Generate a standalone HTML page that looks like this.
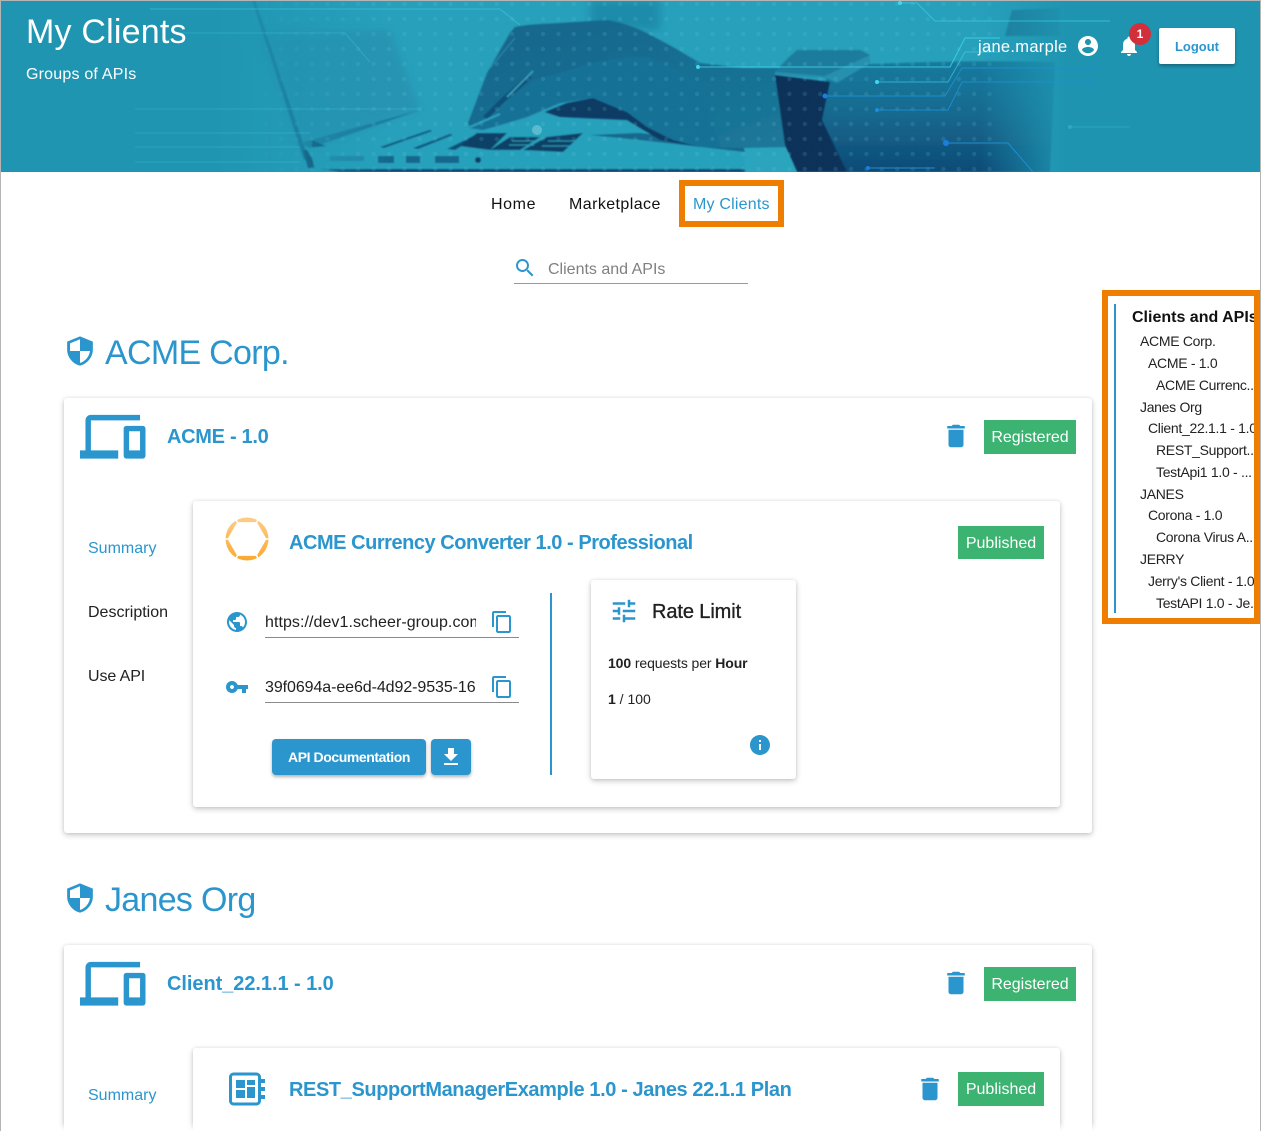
<!DOCTYPE html>
<html><head><meta charset="utf-8"><title>My Clients</title>
<style>
html,body{margin:0;padding:0;background:#fff;width:1261px;height:1131px;overflow:hidden;}
#w{width:1261px;height:1131px;position:relative;overflow:hidden;font-family:"Liberation Sans",Arial,sans-serif;color:#212121;background:#fff;}
.t{position:absolute;white-space:nowrap;line-height:1;}
.b{position:absolute;box-sizing:border-box;}
.card{position:absolute;background:#fff;border-radius:3px;box-shadow:0 2px 6px rgba(0,0,0,.22),0 0 3px rgba(0,0,0,.08);}
.blue{color:#2b96cd;}
.h2{font-size:34px;color:#2b96cd;letter-spacing:-.7px;}
.h5{font-size:20px;font-weight:bold;color:#2b96cd;}
.badge{position:absolute;background:#3cb371;color:#fff;font-size:16px;text-align:center;}
svg.i{position:absolute;fill:#2b96cd;}
.side{font-size:14px;color:#222;letter-spacing:-.3px;}
</style></head>
<body><div id="w">
<svg style="position:absolute;left:0;top:0" width="1261" height="172" viewBox="0 0 1261 172">
<defs>
<linearGradient id="fadeL" x1="0" x2="1" y1="0" y2="0"><stop offset="0" stop-color="#1f95b1"/><stop offset=".55" stop-color="#1f95b1"/><stop offset="1" stop-color="#1f95b1" stop-opacity="0"/></linearGradient>
<linearGradient id="fadeR" x1="0" x2="1" y1="0" y2="0"><stop offset="0" stop-color="#1e94b0" stop-opacity="0"/><stop offset="1" stop-color="#1e94b0"/></linearGradient>
<linearGradient id="arm" x1="0" x2="0" y1="0" y2="1"><stop offset="0" stop-color="#187a9d"/><stop offset=".45" stop-color="#146a90"/><stop offset="1" stop-color="#0f4a76"/></linearGradient>
<linearGradient id="hand" x1="0" x2="1" y1="0" y2="1"><stop offset="0" stop-color="#15648a"/><stop offset="1" stop-color="#1a7899"/></linearGradient>
<linearGradient id="hex" x1="0" x2="0" y1="0" y2="1"><stop offset="0" stop-color="#fdcd8a"/><stop offset="1" stop-color="#fba92e"/></linearGradient>
<pattern id="dots" width="15.4" height="15" patternUnits="userSpaceOnUse"><circle cx="4" cy="4" r="2.2" fill="#6fcbdc" opacity=".4"/></pattern>
<filter id="bl"><feGaussianBlur stdDeviation=".7"/></filter>
<filter id="bl3"><feGaussianBlur stdDeviation="4"/></filter>
<filter id="noise" x="0" y="0" width="100%" height="100%"><feTurbulence baseFrequency=".9" numOctaves="2" seed="3"/><feColorMatrix values="0 0 0 0 .1  0 0 0 0 .3  0 0 0 0 .4  .6 .6 0 0 -.35"/></filter>
</defs>
<rect width="1261" height="172" fill="#27a0bc"/>
<polygon points="255,30 390,30 420,110 300,150" fill="#2594b2" filter="url(#bl3)"/>
<rect x="590" y="0" width="70" height="30" fill="#1f8caa" filter="url(#bl3)"/>
<g filter="url(#bl)">
<polygon points="252,0 255,0 308,158 304,160" fill="#14688c"/>
<polygon points="300,143 420,110 310,148" fill="#1a7a9c"/>
<polygon points="312,140 328,147 312,149" fill="#0f4a72"/>
<polygon points="303,150 311,150 314,168 308,168" fill="#0e3f66"/>
<polygon points="306,148 460,133 560,118 650,133 745,148 745,172 320,172" fill="#28a1bc"/>
<polygon points="320,169 745,169 745,172 340,172" fill="#0f4a72"/>
<polygon points="380,147 430,130 432,131 384,148" fill="#11597f"/>
<polygon points="413,148 450,134 453,135 418,149" fill="#11597f"/>
<polygon points="447,149 473,136 477,137 455,150" fill="#114f78"/>
<polygon points="460,146 477,133 507,133 490,150" fill="#0f3f66"/>
<polygon points="490,150 510,137 540,137 520,150" fill="#0f3f66"/>
<polygon points="523,150 547,137 583,133 563,152" fill="#0f3f66"/>
<path d="M512,141 H538 M509,145 H534 M548,141 H575 M542,146 H570" stroke="#2f9bb6" stroke-width="1" fill="none"/>
<rect x="378" y="156" width="16" height="7" fill="#14668c"/>
<rect x="406" y="156" width="14" height="7" fill="#14668c"/>
<rect x="435" y="156" width="24" height="7" fill="#14668c"/>
<circle cx="478" cy="160" r="3" fill="#0f3f66"/>
<rect x="330" y="156" width="34" height="5" fill="#2187a8"/>
<polygon points="590,135 640,133 743,146 745,152 640,140" fill="#14688c"/>
<polygon points="745,148 785,148 793,163 815,172 745,172" fill="#2aa5bd"/>
<path d="M835,66 C900,62 980,60 1055,62 L1050,172 L815,172 L800,120 Z" fill="url(#arm)"/>
<path d="M545,112 L567,103 593,98 627,112 660,130 700,147 660,140 627,120 560,117 Z" fill="#0e3b63"/>
<path d="M468,123 L487,73 510,33 515,27 C530,24 545,24 560,23 L607,20 C620,22 635,27 647,33 L673,47 700,63 743,68 778,68 L788,147 745,148 700,147 673,140 647,127 627,112 593,98 560,103 527,117 483,130 470,128 Z" fill="url(#hand)"/>
<path d="M470,128 L503,103 533,80 560,73 593,63 627,57 647,57 700,80 720,147 700,147 673,140 647,127 627,112 593,98 560,103 527,117 483,130 Z" fill="#187197"/>
<path d="M485,118 L503,100 530,76" stroke="#114f78" stroke-width="5" fill="none"/>
<path d="M507,97 L533,71" stroke="#3aa3bd" stroke-width="1.6" fill="none"/>
<path d="M490,68 L515,38" stroke="#2b8aaa" stroke-width="1" fill="none"/>
<path d="M470,127 L500,114" stroke="#2fa4bf" stroke-width="2" fill="none"/>
<path d="M775,75 L830,82 822,120 847,172 797,172 785,145 Z" fill="#10305a"/>
<path d="M775,72 L788,58 797,50 860,50 870,55 870,63 837,83 825,78 775,75 Z" fill="#1c7b9d"/>
<path d="M775,72 L825,76 870,55 870,63 837,83 825,78 775,75 Z" fill="#2790ae"/>
<polygon points="1012,10 1060,8 1060,36 1005,36" fill="#1a7a9a"/>
</g>
<rect width="1261" height="172" fill="url(#dots)" opacity=".4" style="clip-path:polygon(265px 0,1000px 0,1000px 172px,265px 172px)"/>
<rect width="1261" height="172" filter="url(#noise)" opacity=".2"/>
<rect x="0" y="0" width="390" height="172" fill="url(#fadeL)"/>
<rect x="980" y="0" width="90" height="172" fill="url(#fadeR)"/>
<rect x="1068" y="0" width="193" height="172" fill="#1e94b0"/>
<g fill="none" stroke-width="1">
<path d="M150,9 H500 L520,25" stroke="#45d0e4" opacity=".5"/>
<path d="M180,33 H345 L370,62" stroke="#45d0e4" opacity=".3"/>
<path d="M135,109 H420 M135,133 H310 M135,147 H300 M135,162 H300" stroke="#45d0e4" opacity=".3"/>
<path d="M900,3 H917 L935,21 H1110" stroke="#3ed7ef" opacity=".6"/>
<path d="M698,67 H950 L965,38 H1000" stroke="#3ed7ef" opacity=".8"/>
<path d="M877,82 H948 L965,52 H1000" stroke="#3ed7ef" opacity=".6"/>
<path d="M825,96 H945 L962,68 H1100" stroke="#1d8fd0" opacity=".9"/>
<path d="M877,110 H948 L962,82 H1100" stroke="#1d8fd0" opacity=".9"/>
<path d="M946,143 H1008 L1033,172" stroke="#1d8fd0"/>
<path d="M868,168 H935" stroke="#1d8fd0"/>
<path d="M1070,127 H1130" stroke="#2ba9c8" opacity=".7"/>
</g>
<g>
<circle cx="900" cy="3" r="2" fill="#3ed7ef"/><circle cx="698" cy="67" r="2" fill="#3ed7ef"/><circle cx="877" cy="82" r="2" fill="#3ed7ef"/><circle cx="825" cy="96" r="2.5" fill="#1a7fe0"/><circle cx="877" cy="110" r="2" fill="#1a8fe0"/><circle cx="946" cy="143" r="3" fill="#1a7fe0"/><circle cx="1070" cy="127" r="2" fill="#2ba9c8"/><circle cx="868" cy="168" r="2" fill="#1a7fe0"/>
<circle cx="537" cy="130" r="5" fill="#8fd4e0" opacity=".5"/>
</g>
</svg>
<div class="b" style="left:0;top:0;width:1261px;height:1px;background:#b5b5b5"></div>
<div class="b" style="left:0;top:0;width:1px;height:1131px;background:#b5b5b5"></div>
<div class="b" style="left:1260px;top:0;width:1px;height:1131px;background:#b5b5b5"></div>

<div class="t" style="left:26px;top:15px;font-size:34px;color:#fff;letter-spacing:.2px">My Clients</div>
<div class="t" style="left:26px;top:67px;font-size:16px;color:#fff;letter-spacing:.2px">Groups of APIs</div>
<div class="t" style="left:978px;top:39px;font-size:16.5px;color:#fff;letter-spacing:.3px">jane.marple</div>
<svg class="i" style="left:1076px;top:34px;fill:#fff" width="24" height="24" viewBox="0 0 24 24"><path d="M12 2C6.48 2 2 6.48 2 12s4.48 10 10 10 10-4.48 10-10S17.52 2 12 2zm0 3c1.66 0 3 1.34 3 3s-1.34 3-3 3-3-1.34-3-3 1.34-3 3-3zm0 14.2c-2.5 0-4.71-1.28-6-3.22.03-1.99 4-3.08 6-3.08 1.99 0 5.97 1.09 6 3.08-1.29 1.94-3.5 3.22-6 3.22z"/></svg>
<svg class="i" style="left:1117px;top:34px;fill:#fff" width="24" height="24" viewBox="0 0 24 24"><path d="M12 22c1.1 0 2-.9 2-2h-4c0 1.1.89 2 2 2zm6-6v-5c0-3.07-1.64-5.64-4.5-6.32V4c0-.83-.67-1.5-1.5-1.5s-1.5.67-1.5 1.5v.68C7.63 5.36 6 7.92 6 11v5l-2 2v1h16v-1l-2-2z"/></svg>
<div class="b" style="left:1129px;top:23px;width:22px;height:22px;border-radius:50%;background:#d32f3a;color:#fff;font-size:12px;font-weight:bold;text-align:center;line-height:22px">1</div>
<div class="b" style="left:1159px;top:28px;width:76px;height:36px;background:#fff;border-radius:2px;box-shadow:0 2px 3px rgba(0,0,0,.3);color:#2b96cd;font-size:13px;font-weight:bold;text-align:center;line-height:37px">Logout</div>

<div class="t" style="left:491px;top:197px;font-size:16px;color:#111;letter-spacing:.6px">Home</div>
<div class="t" style="left:569px;top:197px;font-size:16px;color:#111;letter-spacing:.42px">Marketplace</div>
<div class="b" style="left:679px;top:180px;width:105px;height:47px;border:6px solid #ef7d00"></div>
<div class="t blue" style="left:693px;top:197px;font-size:16px;letter-spacing:.2px">My Clients</div>

<svg class="i" style="left:513px;top:256px" width="24" height="24" viewBox="0 0 24 24"><path d="M15.5 14h-.79l-.28-.27C15.41 12.59 16 11.11 16 9.5 16 5.91 13.09 3 9.5 3S3 5.91 3 9.5 5.91 16 9.5 16c1.61 0 3.09-.59 4.23-1.57l.27.28v.79l5 4.99L20.49 19l-4.99-5zm-6 0C7.01 14 5 11.99 5 9.5S7.01 5 9.5 5 14 7.01 14 9.5 11.99 14 9.5 14z"/></svg>
<div class="t" style="left:548px;top:262px;font-size:16px;color:#808080">Clients and APIs</div>
<div class="b" style="left:514px;top:283px;width:234px;height:1px;background:#999"></div>

<div class="b" style="left:1102px;top:290px;width:158px;height:334px;border:6px solid #ef7d00;background:#fff"></div>
<div class="b" style="left:1114px;top:304px;width:2px;height:309px;background:#2b96cd"></div>
<div class="b" style="left:1108px;top:296px;width:146px;height:322px;overflow:hidden">
<div class="t" style="left:24px;top:14px;font-size:16px;font-weight:bold;color:#111">Clients and APIs</div>
<div class="t side" style="left:32px;top:38px">ACME Corp.</div>
<div class="t side" style="left:40px;top:60px">ACME - 1.0</div>
<div class="t side" style="left:48px;top:82px">ACME Currenc...</div>
<div class="t side" style="left:32px;top:104px">Janes Org</div>
<div class="t side" style="left:40px;top:125px">Client_22.1.1 - 1.0</div>
<div class="t side" style="left:48px;top:147px">REST_Support...</div>
<div class="t side" style="left:48px;top:169px">TestApi1 1.0 - ...</div>
<div class="t side" style="left:32px;top:191px">JANES</div>
<div class="t side" style="left:40px;top:212px">Corona - 1.0</div>
<div class="t side" style="left:48px;top:234px">Corona Virus A...</div>
<div class="t side" style="left:32px;top:256px">JERRY</div>
<div class="t side" style="left:40px;top:278px">Jerry's Client - 1.0</div>
<div class="t side" style="left:48px;top:300px">TestAPI 1.0 - Je...</div>
</div>

<svg class="i" style="left:65px;top:335px" width="30" height="32" viewBox="1.5 0 21 24" preserveAspectRatio="none"><path d="M12 1L3 5v6c0 5.55 3.84 10.74 9 12 5.16-1.26 9-6.45 9-12V5l-9-4zm0 10.99h7c-.53 4.12-3.28 7.79-7 8.94V12H5V6.3l7-3.11v8.8z"/></svg>
<div class="t h2" style="left:105px;top:336px">ACME Corp.</div>

<div class="card" style="left:64px;top:398px;width:1028px;height:435px"></div>
<svg class="i" style="left:80px;top:404px" width="65.5" height="65.5" viewBox="0 0 24 24"><path d="M4 6h18V4H4c-1.1 0-2 .9-2 2v11H0v3h14v-3H4V6zm19 2h-6c-.55 0-1 .45-1 1v10c0 .55.45 1 1 1h6c.55 0 1-.45 1-1V9c0-.55-.45-1-1-1zm-1 9h-4v-7h4v7z"/></svg>
<div class="t h5" style="left:167px;top:427px;letter-spacing:-.3px">ACME - 1.0</div>
<svg class="i" style="left:941px;top:421px" width="30" height="30" viewBox="0 0 24 24"><path d="M6 19c0 1.1.9 2 2 2h8c1.1 0 2-.9 2-2V7H6v12zM19 4h-3.5l-1-1h-5l-1 1H5v2h14V4z"/></svg>
<div class="badge" style="left:984px;top:420px;width:92px;height:34px;line-height:36px">Registered</div>

<div class="t blue" style="left:88px;top:541px;font-size:16px">Summary</div>
<div class="t" style="left:88px;top:605px;font-size:16px">Description</div>
<div class="t" style="left:88px;top:669px;font-size:16px;letter-spacing:-.1px">Use API</div>

<div class="card" style="left:193px;top:501px;width:867px;height:306px"></div>
<svg style="position:absolute;left:224px;top:516px" width="46" height="46" viewBox="0 0 46 46">
<circle cx="23" cy="23" r="21.5" fill="url(#hex)"/>
<polygon points="42.5,23 32.75,6.1 13.25,6.1 3.5,23 13.25,39.9 32.75,39.9" fill="#fff"/>
<path d="M0,23 H46 M11.5,3 L34.5,43 M34.5,3 L11.5,43" stroke="#fff" stroke-width="1.6"/>
</svg>
<div class="t h5" style="left:289px;top:533px;letter-spacing:-.47px">ACME Currency Converter 1.0 - Professional</div>
<div class="badge" style="left:958px;top:526px;width:86px;height:33px;line-height:35px">Published</div>

<svg class="i" style="left:225px;top:610px" width="24" height="24" viewBox="0 0 24 24"><path d="M12 2C6.48 2 2 6.48 2 12s4.48 10 10 10 10-4.48 10-10S17.52 2 12 2zm-1 17.93c-3.95-.49-7-3.85-7-7.93 0-.62.08-1.21.21-1.79L9 15v1c0 1.1.9 2 2 2v1.93zm6.9-2.54c-.26-.81-1-1.39-1.9-1.39h-1v-3c0-.55-.45-1-1-1H8v-2h2c.55 0 1-.45 1-1V7h2c1.1 0 2-.9 2-2v-.41c2.93 1.19 5 4.06 5 7.41 0 2.08-.8 3.97-2.1 5.39z"/></svg>
<div class="b" style="left:265px;top:613px;width:211px;height:20px;overflow:hidden;font-size:16px;line-height:20px;white-space:nowrap;letter-spacing:.06px">https://dev1.scheer-group.com</div>
<svg class="i" style="left:490px;top:610px" width="24" height="24" viewBox="0 0 24 24"><path d="M16 1H4c-1.1 0-2 .9-2 2v14h2V3h12V1zm3 4H8c-1.1 0-2 .9-2 2v14c0 1.1.9 2 2 2h11c1.1 0 2-.9 2-2V7c0-1.1-.9-2-2-2zm0 16H8V7h11v14z"/></svg>
<div class="b" style="left:265px;top:637px;width:254px;height:1px;background:#8a8a8a"></div>

<svg class="i" style="left:225px;top:675px" width="24" height="24" viewBox="0 0 24 24"><path d="M12.65 10C11.83 7.67 9.61 6 7 6c-3.31 0-6 2.69-6 6s2.69 6 6 6c2.61 0 4.83-1.67 5.65-4H17v4h4v-4h2v-4H12.65zM7 14c-1.1 0-2-.9-2-2s.9-2 2-2 2 .9 2 2-.9 2-2 2z"/></svg>
<div class="b" style="left:265px;top:678px;width:214px;height:20px;overflow:hidden;font-size:16px;line-height:20px;white-space:nowrap;letter-spacing:-.08px">39f0694a-ee6d-4d92-9535-16</div>
<svg class="i" style="left:490px;top:675px" width="24" height="24" viewBox="0 0 24 24"><path d="M16 1H4c-1.1 0-2 .9-2 2v14h2V3h12V1zm3 4H8c-1.1 0-2 .9-2 2v14c0 1.1.9 2 2 2h11c1.1 0 2-.9 2-2V7c0-1.1-.9-2-2-2zm0 16H8V7h11v14z"/></svg>
<div class="b" style="left:265px;top:702px;width:254px;height:1px;background:#8a8a8a"></div>

<div class="b" style="left:272px;top:739px;width:154px;height:36px;background:#2b96cd;border-radius:4px;box-shadow:0 2px 3px rgba(0,0,0,.3);color:#fff;font-size:14px;font-weight:bold;text-align:center;line-height:37px;letter-spacing:-.42px">API Documentation</div>
<div class="b" style="left:431px;top:739px;width:40px;height:36px;background:#2b96cd;border-radius:4px;box-shadow:0 2px 3px rgba(0,0,0,.3)"></div>
<svg class="i" style="left:439px;top:745px;fill:#fff" width="24" height="24" viewBox="0 0 24 24"><path d="M19 9h-4V3H9v6H5l7 7 7-7zM5 18v2h14v-2H5z"/></svg>

<div class="b" style="left:550px;top:593px;width:2px;height:182px;background:#2b96cd"></div>

<div class="card" style="left:591px;top:580px;width:205px;height:199px"></div>
<svg class="i" style="left:609px;top:596px" width="30" height="30" viewBox="0 0 24 24"><path d="M3 17v2h6v-2H3zM3 5v2h10V5H3zm10 16v-2h8v-2h-8v-2h-2v6h2zM7 9v2H3v2h4v2h2V9H7zm14 4v-2H11v2h10zm-6-4h2V7h4V5h-4V3h-2v6z"/></svg>
<div class="t" style="left:652px;top:602px;font-size:20px;color:#212121;-webkit-text-stroke:.35px #212121;letter-spacing:-.1px">Rate Limit</div>
<div class="t" style="left:608px;top:656px;font-size:14px;letter-spacing:-.1px"><b>100</b> requests per <b>Hour</b></div>
<div class="t" style="left:608px;top:692px;font-size:14px"><b>1</b> / 100</div>
<svg class="i" style="left:748px;top:733px" width="24" height="24" viewBox="0 0 24 24"><path d="M12 2C6.48 2 2 6.48 2 12s4.48 10 10 10 10-4.48 10-10S17.52 2 12 2zm1 15h-2v-6h2v6zm0-8h-2V7h2v2z"/></svg>

<svg class="i" style="left:65px;top:882px" width="30" height="32" viewBox="1.5 0 21 24" preserveAspectRatio="none"><path d="M12 1L3 5v6c0 5.55 3.84 10.74 9 12 5.16-1.26 9-6.45 9-12V5l-9-4zm0 10.99h7c-.53 4.12-3.28 7.79-7 8.94V12H5V6.3l7-3.11v8.8z"/></svg>
<div class="t h2" style="left:105px;top:883px">Janes Org</div>

<div class="card" style="left:64px;top:945px;width:1028px;height:186px;border-radius:3px 3px 0 0"></div>
<svg class="i" style="left:80px;top:951px" width="65.5" height="65.5" viewBox="0 0 24 24"><path d="M4 6h18V4H4c-1.1 0-2 .9-2 2v11H0v3h14v-3H4V6zm19 2h-6c-.55 0-1 .45-1 1v10c0 .55.45 1 1 1h6c.55 0 1-.45 1-1V9c0-.55-.45-1-1-1zm-1 9h-4v-7h4v7z"/></svg>
<div class="t h5" style="left:167px;top:974px;letter-spacing:-.06px">Client_22.1.1 - 1.0</div>
<svg class="i" style="left:941px;top:968px" width="30" height="30" viewBox="0 0 24 24"><path d="M6 19c0 1.1.9 2 2 2h8c1.1 0 2-.9 2-2V7H6v12zM19 4h-3.5l-1-1h-5l-1 1H5v2h14V4z"/></svg>
<div class="badge" style="left:984px;top:967px;width:92px;height:34px;line-height:36px">Registered</div>

<div class="t blue" style="left:88px;top:1088px;font-size:16px">Summary</div>

<div class="card" style="left:193px;top:1048px;width:867px;height:83px;border-radius:3px 3px 0 0"></div>
<svg style="position:absolute;left:229px;top:1072px" width="37" height="34" viewBox="0 0 37 34">
<rect x="1.5" y="2" width="29" height="30" rx="3" fill="#fff" stroke="#2b96cd" stroke-width="3"/>
<rect x="7" y="8" width="9" height="8" fill="#2b96cd"/><rect x="7" y="18" width="9" height="8" fill="#2b96cd"/>
<rect x="18" y="8" width="8" height="5" fill="#2b96cd"/><rect x="18" y="15" width="8" height="11" fill="#2b96cd"/>
<rect x="31" y="7" width="5" height="4" fill="#2b96cd"/><rect x="31" y="15" width="5" height="4" fill="#2b96cd"/><rect x="31" y="23" width="5" height="4" fill="#2b96cd"/>
</svg>
<div class="t h5" style="left:289px;top:1080px;letter-spacing:-.4px">REST_SupportManagerExample 1.0 - Janes 22.1.1 Plan</div>
<svg class="i" style="left:915px;top:1074px" width="30" height="30" viewBox="0 0 24 24"><path d="M6 19c0 1.1.9 2 2 2h8c1.1 0 2-.9 2-2V7H6v12zM19 4h-3.5l-1-1h-5l-1 1H5v2h14V4z"/></svg>
<div class="badge" style="left:958px;top:1072px;width:86px;height:34px;line-height:36px">Published</div>

<div class="b" style="left:1px;top:1122px;width:1259px;height:9px;background:linear-gradient(rgba(255,255,255,0),#fff)"></div>
</div></body></html>
